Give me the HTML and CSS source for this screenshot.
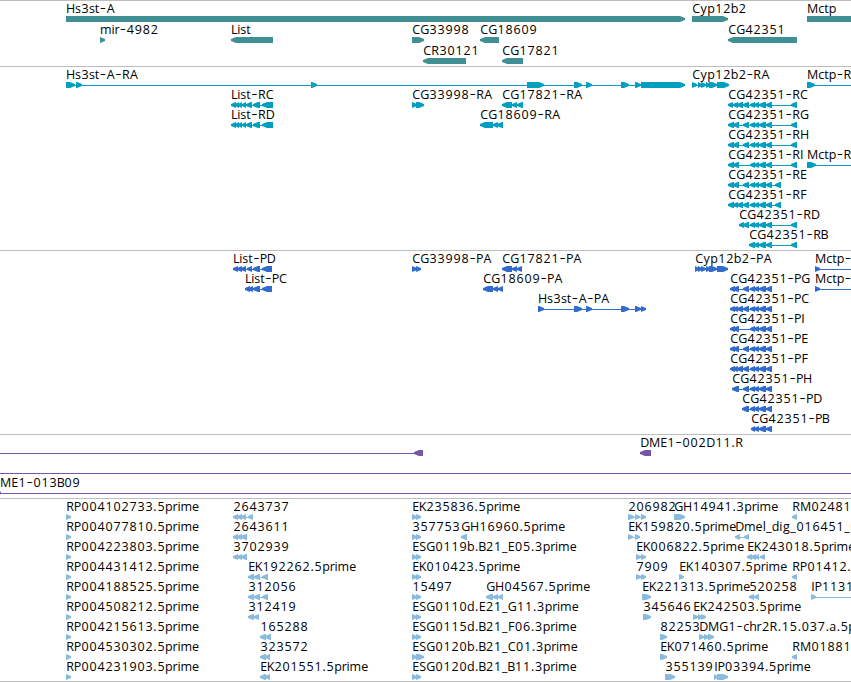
FILE: index.html
```html
<!DOCTYPE html>
<html lang="en">
<head>
  <meta charset="UTF-8" />
  <meta name="viewport" content="width=device-width, initial-scale=1.0"/>
  <title>Genome Browser</title>
  <link rel="stylesheet" href="styles.css">
</head>
<body>

  <main class="browser">
    <section class="track genes" id="genes"></section>
    <section class="track transcripts" id="transcripts"></section>
    <section class="track proteins" id="proteins"></section>
    <section class="track clones" id="clones"></section>
    <section class="track ests" id="ests"></section>
  </main>

  <script src="script.js"></script>
</body>
</html>
```

FILE: styles.css
```css
:root {
  --bg: #ffffff;
  --rule: #bdbdbd;
  --text: #000000;
  --gene: #408f95;
  --transcript: #009fbf;
  --protein: #316bce;
  --clone: #7556a8;
  --est: #88bbdd;
  --font: 'Open Sans', 'Liberation Sans', sans-serif;
}
* {
  margin: 0; padding: 0; box-sizing: border-box;
}
body {
  background: var(--bg); color: var(--text);
  font-family: var(--font);
  overflow: hidden;
}
.browser {
  display: flex; flex-direction: column;
  width: 851px; border-bottom: 1px solid var(--rule);
}

.track {
  border-top: 1px solid var(--rule);
  overflow: hidden;
}
.track svg { display: block; width: 100%; height: 100%; }

.genes { height: 66px; color: var(--gene); }
.transcripts { height: 184px; color: var(--transcript); }
.proteins { height: 184px; color: var(--protein); }
.clones { height: 64px; color: var(--clone); }
.ests { height: 183px; color: var(--est); }

.label {
  font-size: 12.5px; fill: var(--text); text-anchor: middle;
}
.dash { font-family: Inter, sans-serif; font-size: 15px; font-weight: 300; }
.block, .intron { fill: currentColor; }
```

FILE: script.js
```js
const NS = 'http://www.w3.org/2000/svg';
const END = 860; // anything past the right edge of the view

// label glyph advances, digits and anything missing use 8
const advance = {
  A: 8.5, B: 7, C: 8, D: 9, E: 7, F: 7, G: 9, H: 9, I: 3.5, K: 7, L: 6, M: 11,
  P: 7, R: 7.8, S: 7, a: 7, b: 7.5, c: 6, d: 7.5, e: 7.4, g: 7.5, h: 7.5, i: 3.2,
  l: 3, m: 11.2, p: 7.6, r: 4.8, s: 5.8, t: 4.7, y: 7, '.': 4, '-': 7, '_': 6
};

// exons shared by several isoforms
const listR = [[231,236],[235,239],[238,242],[242,246],[246,252],[253,260],[262,273]];
const tail = [[750,755],[754,759],[759,766],[766,772]];
const last = [[791,797]];
const pair = [[412,417],[416,421]];

// [row, x, label, direction, blocks, line end]
const tracks = {
  genes: { pitch: 21, features: [
    [0, 66, 'Hs3st-A', 1, [[66,685]]],
    [0, 692, 'Cyp12b2', 1, [[692,728]]],
    [0, 807, 'Mctp', 1, [[807,END]]],
    [1, 100, 'mir-4982', 1, [[100,105]]],
    [1, 231, 'List', -1, [[231,273]]],
    [1, 412, 'CG33998', 1, [[412,424]]],
    [1, 480, 'CG18609', -1, [[480,499]]],
    [1, 728, 'CG42351', -1, [[728,797]]],
    [2, 423, 'CR30121', -1, [[423,466]]],
    [2, 502, 'CG17821', -1, [[502,523]]]
  ]},
  transcripts: { pitch: 20, features: [
    [0, 66, 'Hs3st-A-RA', 1, [[66,75],[76,82],[311,317],[527,544],[574,582],[586,592],[621,629],[635,641],[641,685]]],
    [0, 692, 'Cyp12b2-RA', 1, [[692,697],[698,702],[701,706],[706,711],[709,717],[717,729]]],
    [0, 807, 'Mctp-RA', 1, [[807,815]], END],
    [1, 231, 'List-RC', -1, listR],
    [1, 412, 'CG33998-RA', 1, [[412,417],[416,424]]],
    [1, 502, 'CG17821-RA', -1, [[502,512],[512,517],[517,523]]],
    [1, 728, 'CG42351-RC', -1, [[728,733],[733,738],[737,743],[743,749],...tail,...last]],
    [2, 231, 'List-RD', -1, listR],
    [2, 480, 'CG18609-RA', -1, [[480,493],[493,498],[497,503]]],
    [2, 728, 'CG42351-RG', -1, [[728,734],[733,739],[743,749],...tail,...last]],
    [3, 728, 'CG42351-RH', -1, [[728,734],[733,739],[743,749],...tail,...last]],
    [4, 728, 'CG42351-RI', -1, [[728,734],[733,739],...tail,...last]],
    [4, 807, 'Mctp-RB', 1, [[807,816]], END],
    [5, 728, 'CG42351-RE', -1, [[728,734],[733,739],[743,749],...tail,[775,781]]],
    [6, 728, 'CG42351-RF', -1, [[728,734],[733,738],[737,743],[743,749],...tail,[775,781]]],
    [7, 739, 'CG42351-RD', -1, [[739,744],[743,749],...tail,...last]],
    [8, 749, 'CG42351-RB', -1, [[749,755],...tail.slice(1),...last]]
  ]},
  proteins: { pitch: 20, features: [
    [0, 233, 'List-PD', -1, [[233,238],[237,242],[241,246],[247,252],[253,260],[262,272]]],
    [0, 412, 'CG33998-PA', 1, pair],
    [0, 502, 'CG17821-PA', -1, [[502,512],[512,517],[517,522]]],
    [0, 695, 'Cyp12b2-PA', 1, [[695,699],[698,702],[701,706],[706,711],[709,717],[717,728]]],
    [0, 815, 'Mctp-PA', 1, [[815,820]], END],
    [1, 245, 'List-PC', -1, [[245,250],[248,253],[253,260],[262,272]]],
    [1, 483, 'CG18609-PA', -1, [[483,493],[493,498],[498,503]]],
    [1, 730, 'CG42351-PG', -1, [[730,735],[733,739],[743,749],...tail]],
    [1, 815, 'Mctp-PB', 1, [[815,820]], END],
    [2, 538, 'Hs3st-A-PA', 1, [[538,544],[574,582],[586,592],[621,629],[635,641],[641,646]]],
    [2, 730, 'CG42351-PC', -1, [[730,735],[733,738],[737,743],[743,749],...tail]],
    [3, 730, 'CG42351-PI', -1, [[730,735],[733,739],...tail]],
    [4, 730, 'CG42351-PE', -1, [[730,735],[733,739],[743,749],...tail]],
    [5, 730, 'CG42351-PF', -1, [[730,735],[733,738],[737,743],[743,749],...tail]],
    [6, 732, 'CG42351-PH', -1, [[732,739],[743,749],...tail]],
    [7, 742, 'CG42351-PD', -1, [[742,749],...tail]],
    [8, 751, 'CG42351-PB', -1, [[751,755],...tail.slice(1)]]
  ]},
  clones: { pitch: 20, features: [
    [0, 0, '', -1, [[414,423]]],
    [0, 640, 'DME1-002D11.R', -1, [[640,651]]],
    [1, 0, '', 1, [], END],
    [2, 0, 'ME1-013B09', 1, [[-4,1]], END]
  ]},
  ests: { pitch: 20, features: [
    [0, 66, 'RP004102733.5prime', 1, [[66,71]]],
    [0, 233, '2643737', -1, [[233,238],[237,242],[241,246],[248,253]]],
    [0, 412, 'EK235836.5prime', 1, pair],
    [0, 628, '206982', 1, [[628,634],[635,640],[641,646]]],
    [0, 674, 'GH14941.3prime', 1, [[674,685]]],
    [0, 792, 'RM02481', -1, [[792,797]]],
    [1, 66, 'RP004077810.5prime', 1, [[66,71]]],
    [1, 233, '2643611', -1, [[233,238],[237,242],[241,247]]],
    [1, 412, '357753', 1, pair],
    [1, 461, 'GH16960.5prime', -1, [[461,467]]],
    [1, 628, 'EK159820.5prime', 1, [[628,633],[635,640]]],
    [1, 735, 'Dmel_dig_016451_0', -1, [[735,740],[744,749]]],
    [2, 66, 'RP004223803.5prime', 1, [[66,71]]],
    [2, 233, '3702939', -1, [[233,238],[237,242],[241,247]]],
    [2, 412, 'ESG0119b.B21_E05.3prime', 1, pair],
    [2, 636, 'EK006822.5prime', 1, [[636,641],[641,646]]],
    [2, 747, 'EK243018.5prime', -1, [[747,752],[751,756],[755,759],[760,765]]],
    [3, 66, 'RP004431412.5prime', 1, [[66,71]]],
    [3, 248, 'EK192262.5prime', -1, [[248,254],[254,260],[262,268]]],
    [3, 412, 'EK010423.5prime', 1, pair],
    [3, 636, '7909', 1, [[636,641],[641,646]]],
    [3, 679, 'EK140307.5prime', 1, [[679,684]]],
    [3, 792, 'RP01412.', -1, [[792,797]]],
    [4, 66, 'RP004188525.5prime', 1, [[66,71]]],
    [4, 248, '312056', -1, [[248,254],[254,260],[262,268]]],
    [4, 412, '15497', 1, pair],
    [4, 486, 'GH04567.5prime', -1, [[486,493],[493,498],[498,503]]],
    [4, 642, 'EK221313.5prime', 1, [[642,651]]],
    [4, 749, '520258', -1, [[749,754],[754,759]]],
    [4, 811, 'IP1131', 1, [[811,816]], END],
    [5, 66, 'RP004508212.5prime', 1, [[66,71]]],
    [5, 248, '312419', -1, [[248,254],[254,259]]],
    [5, 412, 'ESG0110d.E21_G11.3prime', 1, pair],
    [5, 643, '345646', 1, [[643,651]]],
    [5, 693, 'EK242503.5prime', 1, [[693,698],[698,702],[701,706]]],
    [6, 66, 'RP004215613.5prime', 1, [[66,71]]],
    [6, 260, '165288', -1, [[260,266],[265,271]]],
    [6, 412, 'ESG0115d.B21_F06.3prime', 1, pair],
    [6, 660, '82253', 1, [[660,667]]],
    [6, 699, 'DMG1-chr2R.15.037.a.5p', 1, [[699,704],[704,709],[708,714]]],
    [7, 66, 'RP004530302.5prime', 1, [[66,71]]],
    [7, 260, '323572', -1, [[260,266],[265,270]]],
    [7, 412, 'ESG0120b.B21_C01.3prime', 1, [[412,417],[416,424]]],
    [7, 660, 'EK071460.5prime', 1, [[660,667]]],
    [7, 792, 'RM01881', -1, [[792,797]]],
    [8, 66, 'RP004231903.5prime', 1, [[66,71]]],
    [8, 260, 'EK201551.5prime', -1, [[260,266],[265,270]]],
    [8, 412, 'ESG0120d.B21_B11.3prime', 1, pair],
    [8, 665, '355139', 1, [[665,675]]],
    [8, 714, 'IP03394.5prime', 1, [[714,718],[717,728]]]
  ]}
};

function add(parent, name, attrs) {
  const el = document.createElementNS(NS, name);
  for (const key in attrs) el.setAttribute(key, attrs[key]);
  return parent.appendChild(el);
}

function drawLabel(svg, x, y, label) {
  const centers = [];
  for (const ch of label) {
    const w = advance[ch] || 8;
    centers.push((x + w / 2 + 0.2).toFixed(1));
    x += w;
  }
  const text = add(svg, 'text', { class: 'label', x: centers.join(' '), y });
  label.split(/(-)/).forEach(part => {
    if (part === '-') add(text, 'tspan', { class: 'dash' }).textContent = part;
    else text.append(part);
  });
}

function drawBlock(svg, s, e, y, dir) {
  const head = Math.min(5, e - s);
  const [tip, neck, back] = dir > 0 ? [e, e - head, s] : [s, s + head, e];
  add(svg, 'polygon', {
    class: 'block',
    points: `${back},${y} ${neck},${y} ${tip},${y + 2} ${tip},${y + 4} ${neck},${y + 6} ${back},${y + 6}`
  });
}

for (const id in tracks) {
  const { pitch, features } = tracks[id];
  const svg = add(document.getElementById(id), 'svg', { class: 'map' });
  for (const [row, x, label, dir, blocks, lineEnd] of features) {
    const top = row * pitch;
    const end = lineEnd || blocks[blocks.length - 1][1];
    if (lineEnd || blocks.length > 1 || !label) {
      add(svg, 'rect', { class: 'intron', x, y: top + 18, width: end - x, height: 1 });
    }
    blocks.forEach(([s, e]) => drawBlock(svg, s, e, top + 15, dir));
    if (label) drawLabel(svg, x, top + 12, label);
  }
}
```
